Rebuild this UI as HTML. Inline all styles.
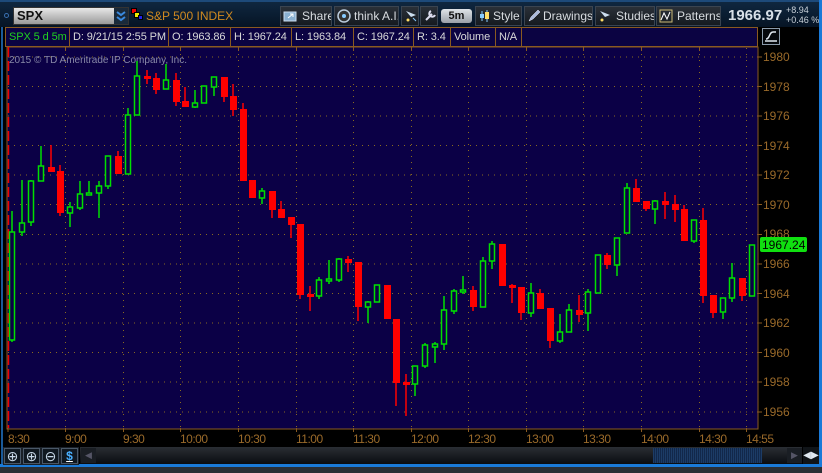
<!DOCTYPE html>
<html><head><meta charset="utf-8">
<style>
*{margin:0;padding:0;box-sizing:border-box}
body{width:822px;height:473px;background:#000;position:relative;overflow:hidden;font-family:"Liberation Sans",sans-serif}
.top{position:absolute;left:0;top:0;width:822px;height:27px;background:linear-gradient(#0f2740,#061424);border-top:2px solid #1d4a7a}
.sym{position:absolute;left:13px;top:5px;width:116px;height:18px;background:linear-gradient(#e8e8e8,#9a9a9a);border:1px solid #333;font-weight:bold;font-size:13px;color:#111;padding-left:3px;line-height:16px}
.dd{position:absolute;right:0;top:0;width:14px;height:16px;background:#1a2a3a}
.btn{position:absolute;top:4px;height:20px;background:linear-gradient(#2a3038,#151a20);border:1px solid #3a4450;color:#d8dce0;font-size:12px;line-height:18px;white-space:nowrap;overflow:hidden}
.btn span{position:absolute;top:0}
.btn svg{position:absolute;left:2px;top:2px}
.info{position:absolute;left:5px;top:27px;width:753px;height:20px;background:#0b0342;border:1px solid #8a5a20}
.cell{position:absolute;top:0;height:18px;border-right:1px solid #8a5a20;color:#d8d8d8;font-size:11px;line-height:18px;padding-left:3px;white-space:nowrap;overflow:hidden;letter-spacing:-0.1px}
.tl{position:absolute;top:432px;color:#9a6a2a;font-size:12px;letter-spacing:-0.5px}
</style></head><body>
<div class="top">
 <div style="position:absolute;left:4px;top:11px;width:5px;height:5px;border:1px solid #3a70b0;border-radius:50%"></div>
 <div class="sym">SPX<div class="dd"><svg width="14" height="16"><path d="M3 4l4 3 4-3M3 9l4 3 4-3" stroke="#3a8ae0" stroke-width="2" fill="none"/></svg></div></div>
 <div style="position:absolute;left:131px;top:6px;width:6px;height:6px;background:#e00;border:1px solid #000"></div>
 <div style="position:absolute;left:134px;top:10px;width:6px;height:6px;background:#ee0;border:1px solid #000"></div>
 <div style="position:absolute;left:138px;top:13px;width:5px;height:5px;background:#22e;border:1px solid #000"></div>
 <div style="position:absolute;left:146px;top:7px;color:#d08a20;font-size:12px">S&amp;P 500 INDEX</div>
 <div class="btn" style="left:280px;width:52px"><svg width="16" height="14"><rect x="1" y="3" width="12" height="9" fill="#8ab0d0" stroke="#cde"/><path d="M5 9l5-4M7 5h3v3" stroke="#fff" fill="none"/></svg><span style="left:21px">Share</span></div>
 <div class="btn" style="left:334px;width:65px"><svg width="16" height="14"><circle cx="7" cy="7" r="6" fill="#333" stroke="#bcd" stroke-width="1.5"/><circle cx="7" cy="7" r="2" fill="#8cf"/></svg><span style="left:19px">think A.I.</span></div>
 <div class="btn" style="left:401px;width:18px"><svg width="14" height="14"><path d="M2 2l10 4-5 2z" fill="#cde"/><circle cx="4" cy="11" r="1.5" fill="#fd6"/><path d="M9 9l3 3" stroke="#8cf"/></svg></div>
 <div class="btn" style="left:420px;width:18px"><svg width="14" height="14"><path d="M3 11l6-6M8 2a3 3 0 104 4" stroke="#dde" stroke-width="2" fill="none"/></svg></div>
 <div style="position:absolute;left:441px;top:7px;width:31px;height:14px;background:linear-gradient(#e0e4e8,#9aa0a8);border-radius:3px;font-weight:bold;font-size:11px;color:#111;text-align:center;line-height:14px">5m</div>
 <div class="btn" style="left:475px;width:47px"><svg width="14" height="14"><path d="M4 2v10M9 1v12" stroke="#8cf"/><rect x="2" y="5" width="4" height="4" fill="#8cf"/><rect x="7" y="3" width="4" height="7" fill="#fd6"/></svg><span style="left:17px">Style</span></div>
 <div class="btn" style="left:524px;width:69px"><svg width="14" height="14"><path d="M2 12l2-4 7-7 2 2-7 7z" fill="#abd" stroke="#eef" stroke-width=".5"/></svg><span style="left:18px">Drawings</span></div>
 <div class="btn" style="left:595px;width:60px"><svg width="14" height="14"><path d="M2 2l10 4-5 2z" fill="#cde"/><circle cx="4" cy="11" r="1.5" fill="#fd6"/></svg><span style="left:20px">Studies</span></div>
 <div class="btn" style="left:656px;width:65px"><svg width="14" height="14"><rect x="1" y="1" width="12" height="12" fill="none" stroke="#cb7"/><path d="M2 11l3-7 3 6 3-7" stroke="#fff" fill="none"/></svg><span style="left:20px">Patterns</span></div>
 <div style="position:absolute;left:728px;top:5px;color:#d8e0e8;font-weight:bold;font-size:15px">1966.97</div>
 <div style="position:absolute;left:786px;top:3px;color:#c8d0d8;font-size:9px;line-height:10px;white-space:nowrap">+8.94<br>+0.46 %</div>
</div>
<div style="position:absolute;left:819px;top:0;width:3px;height:467px;background:#1a7ad8"></div>
<div style="position:absolute;left:0;top:464px;width:822px;height:3px;background:#1a7ad8"></div>
<div style="position:absolute;left:0;top:467px;width:822px;height:6px;background:#2a2e34"></div>
<div style="position:absolute;left:1px;top:27px;width:2px;height:437px;background:#1a5a9a"></div>
<div class="info">
 <div class="cell" style="left:0;width:64px;color:#20d020">SPX 5 d 5m</div>
 <div class="cell" style="left:64px;width:99px">D: 9/21/15 2:55 PM</div>
 <div class="cell" style="left:163px;width:62px">O: 1963.86</div>
 <div class="cell" style="left:225px;width:61px">H: 1967.24</div>
 <div class="cell" style="left:286px;width:62px">L: 1963.84</div>
 <div class="cell" style="left:348px;width:60px">C: 1967.24</div>
 <div class="cell" style="left:408px;width:37px">R: 3.4</div>
 <div class="cell" style="left:445px;width:45px">Volume</div>
 <div class="cell" style="left:490px;width:26px">N/A</div>
</div>
<div style="position:absolute;left:762px;top:28px;width:18px;height:17px;border:1px solid #8a9aaa;background:#05080c"><svg width="16" height="15"><path d="M2 12h12M3 10c4 0 3-7 7-7h3" stroke="#e0e8f0" stroke-width="1.5" fill="none"/></svg></div>
<svg style="position:absolute;left:0;top:0" width="822" height="473">
 <rect x="7" y="47" width="751" height="382" fill="#0b0046" stroke="#8a5a20"/>
 <g stroke="#8a6a20" stroke-dasharray="1 5" stroke-width="1">
  <line x1="8" x2="757" y1="86.5" y2="86.5"/><line x1="8" x2="757" y1="116" y2="116"/><line x1="8" x2="757" y1="145.5" y2="145.5"/><line x1="8" x2="757" y1="175" y2="175"/><line x1="8" x2="757" y1="204.5" y2="204.5"/><line x1="8" x2="757" y1="234.5" y2="234.5"/><line x1="8" x2="757" y1="264" y2="264"/><line x1="8" x2="757" y1="293.5" y2="293.5"/><line x1="8" x2="757" y1="323" y2="323"/><line x1="8" x2="757" y1="352.5" y2="352.5"/><line x1="8" x2="757" y1="382" y2="382"/><line x1="8" x2="757" y1="412" y2="412"/><line x1="8" x2="757" y1="57" y2="57"/>
  <line x1="65.5" x2="65.5" y1="48" y2="428"/><line x1="123.5" x2="123.5" y1="48" y2="428"/><line x1="180.5" x2="180.5" y1="48" y2="428"/><line x1="238.5" x2="238.5" y1="48" y2="428"/><line x1="296.5" x2="296.5" y1="48" y2="428"/><line x1="353.5" x2="353.5" y1="48" y2="428"/><line x1="411.5" x2="411.5" y1="48" y2="428"/><line x1="468.5" x2="468.5" y1="48" y2="428"/><line x1="526.5" x2="526.5" y1="48" y2="428"/><line x1="583.5" x2="583.5" y1="48" y2="428"/><line x1="641.5" x2="641.5" y1="48" y2="428"/><line x1="699.5" x2="699.5" y1="48" y2="428"/><line x1="746.5" x2="746.5" y1="48" y2="428"/>
 </g>
 <line x1="8.5" x2="8.5" y1="47" y2="428" stroke="#e00" stroke-dasharray="10 4" stroke-width="1.5"/>
 <g stroke="#8a5a20"><line x1="65.5" x2="65.5" y1="47" y2="51"/><line x1="123.5" x2="123.5" y1="47" y2="51"/><line x1="180.5" x2="180.5" y1="47" y2="51"/><line x1="238.5" x2="238.5" y1="47" y2="51"/><line x1="296.5" x2="296.5" y1="47" y2="51"/><line x1="353.5" x2="353.5" y1="47" y2="51"/><line x1="411.5" x2="411.5" y1="47" y2="51"/><line x1="468.5" x2="468.5" y1="47" y2="51"/><line x1="526.5" x2="526.5" y1="47" y2="51"/><line x1="583.5" x2="583.5" y1="47" y2="51"/><line x1="641.5" x2="641.5" y1="47" y2="51"/><line x1="699.5" x2="699.5" y1="47" y2="51"/>
 <line x1="757" x2="762" y1="57" y2="57"/><line x1="757" x2="762" y1="86.5" y2="86.5"/><line x1="757" x2="762" y1="116" y2="116"/><line x1="757" x2="762" y1="145.5" y2="145.5"/><line x1="757" x2="762" y1="175" y2="175"/><line x1="757" x2="762" y1="204.5" y2="204.5"/><line x1="757" x2="762" y1="234.5" y2="234.5"/><line x1="757" x2="762" y1="264" y2="264"/><line x1="757" x2="762" y1="293.5" y2="293.5"/><line x1="757" x2="762" y1="323" y2="323"/><line x1="757" x2="762" y1="352.5" y2="352.5"/><line x1="757" x2="762" y1="382" y2="382"/><line x1="757" x2="762" y1="412" y2="412"/></g>
 <text x="9" y="63" fill="#8888a8" font-family="Liberation Sans" font-size="10">2015 © TD Ameritrade IP Company, Inc.</text>
 <g fill="#9a6a2a" font-family="Liberation Sans" font-size="12">
  <text x="763" y="61">1980</text><text x="763" y="91">1978</text><text x="763" y="120">1976</text><text x="763" y="150">1974</text><text x="763" y="179">1972</text><text x="763" y="209">1970</text><text x="763" y="238">1968</text><text x="763" y="268">1966</text><text x="763" y="298">1964</text><text x="763" y="327">1962</text><text x="763" y="357">1960</text><text x="763" y="386">1958</text><text x="763" y="416">1956</text>
 </g>
 <rect x="760" y="237" width="47" height="15" rx="2" fill="#10e010"/>
 <text x="762" y="249" fill="#000" font-family="Liberation Sans" font-size="12">1967.24</text>
 <g stroke="#00e000" stroke-width="1.5">
  <line x1="12" x2="12" y1="211" y2="342"/><line x1="22" x2="22" y1="180" y2="236"/><line x1="31" x2="31" y1="180" y2="226"/><line x1="41" x2="41" y1="146" y2="181"/><line x1="70" x2="70" y1="202" y2="227"/><line x1="80" x2="80" y1="181" y2="210"/><line x1="89" x2="89" y1="181" y2="195"/><line x1="99" x2="99" y1="181" y2="218"/><line x1="108" x2="108" y1="156" y2="189"/><line x1="128" x2="128" y1="108" y2="174"/><line x1="137" x2="137" y1="61" y2="115"/><line x1="166" x2="166" y1="64" y2="89"/><line x1="195" x2="195" y1="90" y2="108"/><line x1="204" x2="204" y1="86" y2="103"/><line x1="214" x2="214" y1="77" y2="96"/><line x1="262" x2="262" y1="188" y2="204"/><line x1="319" x2="319" y1="277" y2="299"/><line x1="329" x2="329" y1="260" y2="284"/><line x1="339" x2="339" y1="258" y2="282"/><line x1="368" x2="368" y1="301" y2="323"/><line x1="377" x2="377" y1="285" y2="302"/><line x1="415" x2="415" y1="366" y2="396"/><line x1="425" x2="425" y1="343" y2="368"/><line x1="435" x2="435" y1="342" y2="363"/><line x1="444" x2="444" y1="296" y2="350"/><line x1="454" x2="454" y1="289" y2="314"/><line x1="463" x2="463" y1="276" y2="294"/><line x1="483" x2="483" y1="257" y2="307"/><line x1="492" x2="492" y1="241" y2="269"/><line x1="531" x2="531" y1="283" y2="317"/><line x1="560" x2="560" y1="314" y2="343"/><line x1="569" x2="569" y1="304" y2="332"/><line x1="588" x2="588" y1="289" y2="331"/><line x1="598" x2="598" y1="255" y2="293"/><line x1="617" x2="617" y1="238" y2="276"/><line x1="627" x2="627" y1="183" y2="233"/><line x1="655" x2="655" y1="200" y2="224"/><line x1="694" x2="694" y1="220" y2="243"/><line x1="723" x2="723" y1="298" y2="319"/><line x1="732" x2="732" y1="263" y2="302"/><line x1="752" x2="752" y1="245" y2="296"/>
 </g>
 <g stroke="#00e000" stroke-width="1.5" fill="#0b0046">
  <rect x="9.5" y="232" width="5" height="108"/><rect x="19.5" y="223" width="5" height="9"/><rect x="28.5" y="181" width="5" height="41"/><rect x="38.5" y="166" width="5" height="15"/><rect x="67.5" y="207" width="5" height="6"/><rect x="77.5" y="194" width="5" height="14"/><rect x="86.5" y="193" width="5" height="2"/><rect x="96.5" y="186" width="5" height="7"/><rect x="105.5" y="156" width="5" height="30"/><rect x="125.5" y="115" width="5" height="59"/><rect x="134.5" y="76" width="5" height="39"/><rect x="163.5" y="80" width="5" height="9"/><rect x="192.5" y="103" width="5" height="4"/><rect x="201.5" y="86" width="5" height="17"/><rect x="211.5" y="77" width="5" height="10"/><rect x="259.5" y="191" width="5" height="7"/><rect x="316.5" y="280" width="5" height="16"/><rect x="326.5" y="279" width="5" height="2"/><rect x="336.5" y="259" width="5" height="21"/><rect x="365.5" y="302" width="5" height="5"/><rect x="374.5" y="285" width="5" height="17"/><rect x="412.5" y="366" width="5" height="18"/><rect x="422.5" y="345" width="5" height="21"/><rect x="432.5" y="344" width="5" height="3"/><rect x="441.5" y="310" width="5" height="34"/><rect x="451.5" y="291" width="5" height="20"/><rect x="460.5" y="290" width="5" height="2"/><rect x="480.5" y="261" width="5" height="46"/><rect x="489.5" y="244" width="5" height="17"/><rect x="528.5" y="293" width="5" height="20"/><rect x="557.5" y="332" width="5" height="9"/><rect x="566.5" y="310" width="5" height="22"/><rect x="585.5" y="292" width="5" height="21"/><rect x="595.5" y="255" width="5" height="38"/><rect x="614.5" y="238" width="5" height="27"/><rect x="624.5" y="188" width="5" height="45"/><rect x="652.5" y="201" width="5" height="8"/><rect x="691.5" y="220" width="5" height="21"/><rect x="720.5" y="298" width="5" height="14"/><rect x="729.5" y="278" width="5" height="20"/><rect x="749.5" y="245" width="5" height="51"/>
 </g>
 <g stroke="#ff0000" stroke-width="1.5">
  <line x1="51" x2="51" y1="145" y2="172"/><line x1="60" x2="60" y1="165" y2="216"/><line x1="118" x2="118" y1="151" y2="174"/><line x1="147" x2="147" y1="70" y2="84"/><line x1="156" x2="156" y1="73" y2="94"/><line x1="176" x2="176" y1="73" y2="106"/><line x1="185" x2="185" y1="87" y2="107"/><line x1="224" x2="224" y1="77" y2="102"/><line x1="233" x2="233" y1="84" y2="116"/><line x1="243" x2="243" y1="103" y2="181"/><line x1="252" x2="252" y1="180" y2="198"/><line x1="272" x2="272" y1="191" y2="218"/><line x1="281" x2="281" y1="201" y2="218"/><line x1="291" x2="291" y1="217" y2="238"/><line x1="300" x2="300" y1="224" y2="299"/><line x1="310" x2="310" y1="286" y2="311"/><line x1="348" x2="348" y1="256" y2="272"/><line x1="358" x2="358" y1="262" y2="321"/><line x1="387" x2="387" y1="285" y2="319"/><line x1="396" x2="396" y1="319" y2="406"/><line x1="406" x2="406" y1="374" y2="416"/><line x1="473" x2="473" y1="286" y2="311"/><line x1="502" x2="502" y1="244" y2="286"/><line x1="512" x2="512" y1="284" y2="303"/><line x1="521" x2="521" y1="287" y2="320"/><line x1="540" x2="540" y1="289" y2="309"/><line x1="550" x2="550" y1="308" y2="348"/><line x1="579" x2="579" y1="295" y2="322"/><line x1="607" x2="607" y1="253" y2="269"/><line x1="636" x2="636" y1="179" y2="202"/><line x1="646" x2="646" y1="201" y2="211"/><line x1="665" x2="665" y1="192" y2="219"/><line x1="675" x2="675" y1="195" y2="222"/><line x1="684" x2="684" y1="205" y2="241"/><line x1="703" x2="703" y1="208" y2="303"/><line x1="713" x2="713" y1="295" y2="318"/><line x1="742" x2="742" y1="278" y2="301"/>
 </g>
 <g fill="#ff0000">
  <rect x="48" y="167" width="7" height="5"/><rect x="57" y="171" width="7" height="42"/><rect x="115" y="156" width="7" height="18"/><rect x="144" y="76" width="7" height="3"/><rect x="153" y="78" width="7" height="12"/><rect x="173" y="80" width="7" height="22"/><rect x="182" y="101" width="7" height="6"/><rect x="221" y="77" width="7" height="20"/><rect x="230" y="96" width="7" height="14"/><rect x="240" y="109" width="7" height="72"/><rect x="249" y="180" width="7" height="18"/><rect x="269" y="191" width="7" height="19"/><rect x="278" y="209" width="7" height="9"/><rect x="288" y="217" width="7" height="8"/><rect x="297" y="224" width="7" height="71"/><rect x="307" y="294" width="7" height="3"/><rect x="345" y="259" width="7" height="4"/><rect x="355" y="262" width="7" height="45"/><rect x="384" y="285" width="7" height="34"/><rect x="393" y="319" width="7" height="64"/><rect x="403" y="382" width="7" height="3"/><rect x="470" y="290" width="7" height="17"/><rect x="499" y="244" width="7" height="42"/><rect x="509" y="285" width="7" height="3"/><rect x="518" y="287" width="7" height="26"/><rect x="537" y="293" width="7" height="16"/><rect x="547" y="308" width="7" height="33"/><rect x="576" y="310" width="7" height="5"/><rect x="604" y="255" width="7" height="10"/><rect x="633" y="188" width="7" height="14"/><rect x="643" y="201" width="7" height="8"/><rect x="662" y="201" width="7" height="4"/><rect x="672" y="204" width="7" height="6"/><rect x="681" y="209" width="7" height="32"/><rect x="700" y="220" width="7" height="76"/><rect x="710" y="295" width="7" height="18"/><rect x="739" y="278" width="7" height="18"/>
 </g>
 <g stroke="#8a5a20"><line x1="8" x2="8" y1="428" y2="432"/><line x1="65.5" x2="65.5" y1="428" y2="432"/><line x1="123.5" x2="123.5" y1="428" y2="432"/><line x1="180.5" x2="180.5" y1="428" y2="432"/><line x1="238.5" x2="238.5" y1="428" y2="432"/><line x1="296.5" x2="296.5" y1="428" y2="432"/><line x1="353.5" x2="353.5" y1="428" y2="432"/><line x1="411.5" x2="411.5" y1="428" y2="432"/><line x1="468.5" x2="468.5" y1="428" y2="432"/><line x1="526.5" x2="526.5" y1="428" y2="432"/><line x1="583.5" x2="583.5" y1="428" y2="432"/><line x1="641.5" x2="641.5" y1="428" y2="432"/><line x1="699.5" x2="699.5" y1="428" y2="432"/><line x1="746.5" x2="746.5" y1="428" y2="432"/></g>
</svg>
<div class="tl" style="left:8px">8:30</div><div class="tl" style="left:65px">9:00</div><div class="tl" style="left:123px">9:30</div><div class="tl" style="left:180px">10:00</div><div class="tl" style="left:238px">10:30</div><div class="tl" style="left:296px">11:00</div><div class="tl" style="left:353px">11:30</div><div class="tl" style="left:411px">12:00</div><div class="tl" style="left:468px">12:30</div><div class="tl" style="left:526px">13:00</div><div class="tl" style="left:583px">13:30</div><div class="tl" style="left:641px">14:00</div><div class="tl" style="left:699px">14:30</div><div class="tl" style="left:746px">14:55</div>
<div style="position:absolute;left:3px;top:447px;width:76px;height:18px;background:#1a2028"></div>
<div style="position:absolute;left:4px;top:448px;width:17px;height:16px;border:1px solid #4a5868;background:#101820;color:#c8d8e8;font-size:14px;line-height:14px;text-align:center">⊕</div>
<div style="position:absolute;left:23px;top:448px;width:17px;height:16px;border:1px solid #4a5868;background:#101820;color:#c8d8e8;font-size:14px;line-height:14px;text-align:center">⊕</div>
<div style="position:absolute;left:42px;top:448px;width:17px;height:16px;border:1px solid #4a5868;background:#101820;color:#c8d8e8;font-size:14px;line-height:14px;text-align:center">⊖</div>
<div style="position:absolute;left:61px;top:448px;width:17px;height:16px;border:1px solid #4a5868;background:#101820;color:#4ab0ff;font-size:12px;font-weight:bold;line-height:14px;text-align:center;text-decoration:underline;text-decoration-color:#fff">$</div>
<div style="position:absolute;left:80px;top:447px;width:722px;height:17px;background:linear-gradient(#2a2e34,#0a0c10)"></div>
<div style="position:absolute;left:81px;top:448px;width:15px;height:15px;background:#1a1e24;color:#556;font-size:9px;text-align:center;line-height:15px">◀</div>
<div style="position:absolute;left:653px;top:448px;width:109px;height:15px;background:repeating-linear-gradient(90deg,#1c3c66 0 1px,#12284a 1px 2px)"></div>
<div style="position:absolute;left:787px;top:448px;width:15px;height:15px;background:#1a1e24;color:#556;font-size:9px;text-align:center;line-height:15px">▶</div>
<div style="position:absolute;left:803px;top:447px;width:16px;height:17px;background:#101418;color:#e0e8f0;font-size:10px;text-align:center;line-height:17px">◀▶</div>
</body></html>
